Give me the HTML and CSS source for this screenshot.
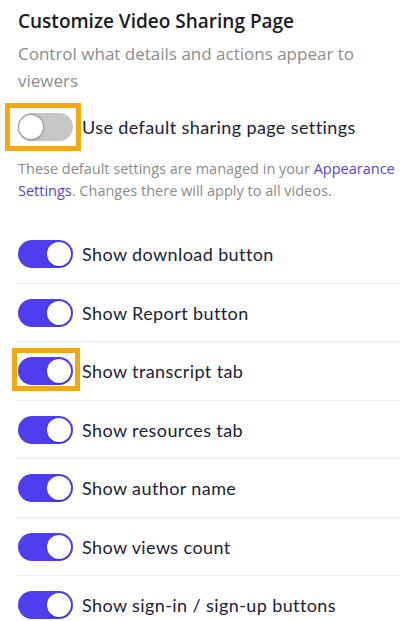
FILE: index.html
```html
<!DOCTYPE html>
<html>
<head>
<meta charset="utf-8">
<link rel="stylesheet" href="styles.css">
</head>
<body>
<div class="panel">
  <h1 class="title">Customize Video Sharing Page</h1>
  <p class="subtitle">Control what details and actions appear to viewers</p>

  <div class="default-row">
    <span class="toggle off"><span class="hl hl-a"></span><span class="knob"></span></span>
    <span class="label">Use default sharing page settings</span>
  </div>
  <p class="desc">These default settings are managed in your <span class="link">Appearance</span> <span class="link">Settings</span>. Changes there will apply to all videos.</p>

  <ul class="list">
    <li class="row"><span class="toggle on"><span class="knob"></span></span><span class="label">Show download button</span></li>
    <li class="row"><span class="toggle on"><span class="knob"></span></span><span class="label">Show Report button</span></li>
    <li class="row"><span class="toggle on"><span class="hl hl-b"></span><span class="knob"></span></span><span class="label">Show transcript tab</span></li>
    <li class="row"><span class="toggle on"><span class="knob"></span></span><span class="label">Show resources tab</span></li>
    <li class="row"><span class="toggle on"><span class="knob"></span></span><span class="label">Show author name</span></li>
    <li class="row"><span class="toggle on"><span class="knob"></span></span><span class="label">Show views count</span></li>
    <li class="row"><span class="toggle on"><span class="knob"></span></span><span class="label">Show sign-in / sign-up buttons</span></li>
  </ul>
</div>
</body>
</html>
```

FILE: styles.css
```css
html, body {
  margin: 0;
  padding: 0;
  background: #ffffff;
}
.panel {
  padding: 9px 5px 0 18px;
  font-family: "Open Sans", "Noto Sans", sans-serif;
}
.title {
  margin: 0;
  font-size: 19px;
  line-height: 24px;
  font-weight: 600;
  color: #1b1b1f;
}
.subtitle {
  margin: 7px 0 0 0;
  font-size: 17px;
  line-height: 27px;
  color: #8c8c8c;
  padding-right: 30px;
}
.default-row {
  display: flex;
  align-items: center;
  gap: 9px;
  margin-top: 19px;
}
.label {
  font-family: "Lato", "Noto Sans", sans-serif;
  font-size: 18px;
  color: #1b2236;
  letter-spacing: 0.4px;
}
.desc {
  margin: 17px 0 0 0;
  font-size: 14.5px;
  line-height: 22px;
  color: #8a8a8a;
}
.link {
  color: #5a3ee6;
}
.list {
  list-style: none;
  margin: 23px 0 0 0;
  padding: 0;
}
.row {
  display: flex;
  align-items: center;
  gap: 9px;
  padding: 15px 0 14.5px 0;
  border-bottom: 1px solid #ededed;
  margin-left: -2px;
  padding-left: 1px;
}
.row:last-child {
  border-bottom: none;
}
.toggle {
  position: relative;
  flex: none;
  width: 55px;
  height: 28px;
  border-radius: 14px;
  box-sizing: border-box;
}
.row .toggle {
  margin-left: 1px;
}
.toggle.on {
  background: #4f3ef0;
}
.toggle.off {
  background: #c6c6c6;
}
.knob {
  position: absolute;
  top: 2px;
  width: 24px;
  height: 24px;
  border-radius: 50%;
  background: #ffffff;
  box-shadow: 0 1px 2px rgba(0, 0, 0, 0.3);
}
.on .knob {
  right: 2px;
}
.off .knob {
  left: 1px;
  box-shadow: 0 0 0 1px #9a9a9a, 0 1px 3px rgba(0, 0, 0, 0.35);
}
.hl {
  position: absolute;
  border: 5px solid #f6a70c;
  box-sizing: border-box;
}
.hl-a {
  left: -13px;
  right: -8px;
  top: -10px;
  bottom: -10px;
}
.hl-b {
  left: -6px;
  right: -7px;
  top: -9px;
  bottom: -6px;
}
```
